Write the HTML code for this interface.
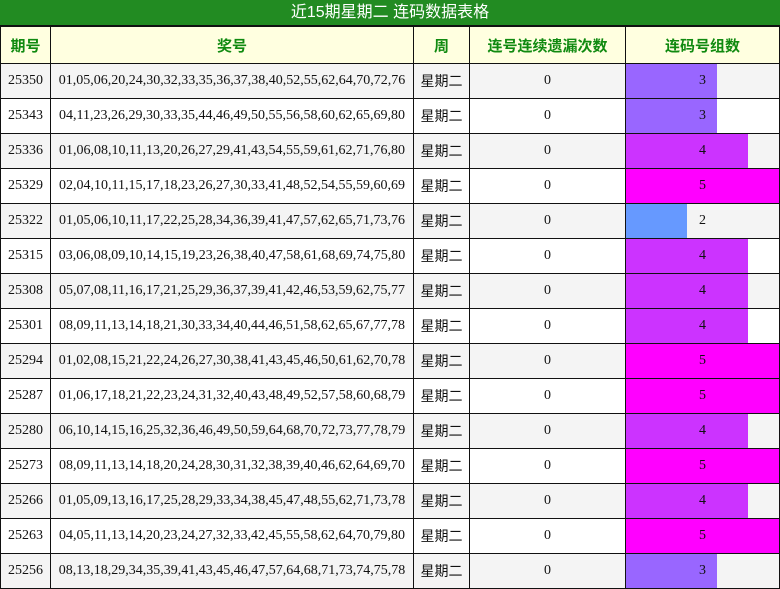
<!DOCTYPE html>
<html><head><meta charset="utf-8"><style>
body{margin:0;width:780px;height:589px;background:#fff;overflow:hidden;position:relative;font-family:"Liberation Serif","Noto Serif CJK SC",serif;}
.t{position:absolute;left:0;top:0;width:780px;height:26px;background:#228b22;color:#fff;font:16px/26px "Liberation Sans","Noto Sans CJK SC",sans-serif;text-align:center;border-bottom:1px solid #111;box-sizing:border-box}
table{position:absolute;left:0;top:26px;border-collapse:collapse;table-layout:fixed;width:779px}
td,th{border:1px solid #111;padding:0;text-align:center;overflow:hidden;white-space:nowrap}
th{height:36px;background:#ffffe0;color:#108a10;font:bold 15px "Liberation Sans","Noto Sans CJK SC",sans-serif}
td{height:34px;font-size:14px;color:#111}
tr:nth-child(even) td{background:#f4f4f4}
td.w{font-family:"Liberation Sans","Noto Sans CJK SC",sans-serif;font-size:14px}
td.b{position:relative}
td.b i{position:absolute;left:0;top:0;bottom:0}
td.b span{position:relative}
</style></head><body>
<div class="t">近15期星期二 连码数据表格</div>
<table>
<colgroup><col style="width:50px"><col style="width:363px"><col style="width:56px"><col style="width:156px"><col style="width:154px"></colgroup>
<tr><th>期号</th><th>奖号</th><th>周</th><th>连号连续遗漏次数</th><th>连码号组数</th></tr>
<tr><td>25350</td><td>01,05,06,20,24,30,32,33,35,36,37,38,40,52,55,62,64,70,72,76</td><td class="w">星期二</td><td>0</td><td class="b"><i style="width:91px;background:#9966ff"></i><span>3</span></td></tr>
<tr><td>25343</td><td>04,11,23,26,29,30,33,35,44,46,49,50,55,56,58,60,62,65,69,80</td><td class="w">星期二</td><td>0</td><td class="b"><i style="width:91px;background:#9966ff"></i><span>3</span></td></tr>
<tr><td>25336</td><td>01,06,08,10,11,13,20,26,27,29,41,43,54,55,59,61,62,71,76,80</td><td class="w">星期二</td><td>0</td><td class="b"><i style="width:122px;background:#cc33ff"></i><span>4</span></td></tr>
<tr><td>25329</td><td>02,04,10,11,15,17,18,23,26,27,30,33,41,48,52,54,55,59,60,69</td><td class="w">星期二</td><td>0</td><td class="b"><i style="width:154px;background:#ff00ff"></i><span>5</span></td></tr>
<tr><td>25322</td><td>01,05,06,10,11,17,22,25,28,34,36,39,41,47,57,62,65,71,73,76</td><td class="w">星期二</td><td>0</td><td class="b"><i style="width:61px;background:#6699ff"></i><span>2</span></td></tr>
<tr><td>25315</td><td>03,06,08,09,10,14,15,19,23,26,38,40,47,58,61,68,69,74,75,80</td><td class="w">星期二</td><td>0</td><td class="b"><i style="width:122px;background:#cc33ff"></i><span>4</span></td></tr>
<tr><td>25308</td><td>05,07,08,11,16,17,21,25,29,36,37,39,41,42,46,53,59,62,75,77</td><td class="w">星期二</td><td>0</td><td class="b"><i style="width:122px;background:#cc33ff"></i><span>4</span></td></tr>
<tr><td>25301</td><td>08,09,11,13,14,18,21,30,33,34,40,44,46,51,58,62,65,67,77,78</td><td class="w">星期二</td><td>0</td><td class="b"><i style="width:122px;background:#cc33ff"></i><span>4</span></td></tr>
<tr><td>25294</td><td>01,02,08,15,21,22,24,26,27,30,38,41,43,45,46,50,61,62,70,78</td><td class="w">星期二</td><td>0</td><td class="b"><i style="width:154px;background:#ff00ff"></i><span>5</span></td></tr>
<tr><td>25287</td><td>01,06,17,18,21,22,23,24,31,32,40,43,48,49,52,57,58,60,68,79</td><td class="w">星期二</td><td>0</td><td class="b"><i style="width:154px;background:#ff00ff"></i><span>5</span></td></tr>
<tr><td>25280</td><td>06,10,14,15,16,25,32,36,46,49,50,59,64,68,70,72,73,77,78,79</td><td class="w">星期二</td><td>0</td><td class="b"><i style="width:122px;background:#cc33ff"></i><span>4</span></td></tr>
<tr><td>25273</td><td>08,09,11,13,14,18,20,24,28,30,31,32,38,39,40,46,62,64,69,70</td><td class="w">星期二</td><td>0</td><td class="b"><i style="width:154px;background:#ff00ff"></i><span>5</span></td></tr>
<tr><td>25266</td><td>01,05,09,13,16,17,25,28,29,33,34,38,45,47,48,55,62,71,73,78</td><td class="w">星期二</td><td>0</td><td class="b"><i style="width:122px;background:#cc33ff"></i><span>4</span></td></tr>
<tr><td>25263</td><td>04,05,11,13,14,20,23,24,27,32,33,42,45,55,58,62,64,70,79,80</td><td class="w">星期二</td><td>0</td><td class="b"><i style="width:154px;background:#ff00ff"></i><span>5</span></td></tr>
<tr><td>25256</td><td>08,13,18,29,34,35,39,41,43,45,46,47,57,64,68,71,73,74,75,78</td><td class="w">星期二</td><td>0</td><td class="b"><i style="width:91px;background:#9966ff"></i><span>3</span></td></tr>
</table>
</body></html>
